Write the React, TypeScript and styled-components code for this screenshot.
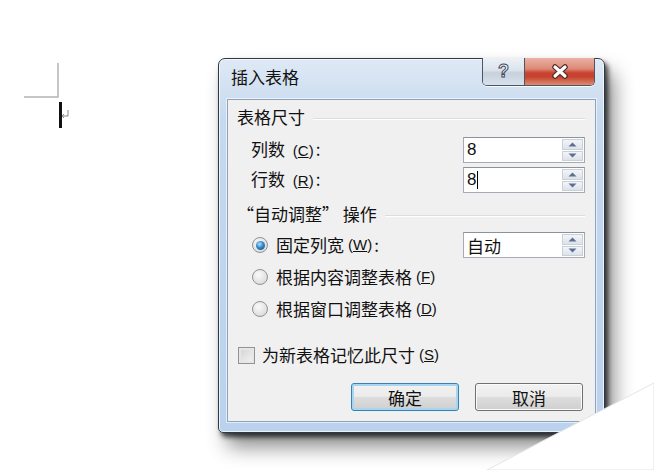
import styled, { createGlobalStyle } from 'styled-components'

const GlobalStyle = createGlobalStyle`
  html, body {
    margin: 0;
    padding: 0;
    background: #fff;
  }
`

const cjk = `"Noto Sans CJK SC", "Noto Sans", sans-serif`

const Spin = () => (
  <SpinBox>
    <SpinHalf>
      <svg width="9" height="5" viewBox="0 0 9 5">
        <path d="M0.5 4.5 L4.5 0.5 L8.5 4.5 Z" fill="#5a6f92" />
      </svg>
    </SpinHalf>
    <SpinHalf>
      <svg width="9" height="5" viewBox="0 0 9 5">
        <path d="M0.5 0.5 L4.5 4.5 L8.5 0.5 Z" fill="#5a6f92" />
      </svg>
    </SpinHalf>
  </SpinBox>
)

const App = () => {
  return (
    <>
      <GlobalStyle />
      <Canvas>
        <Marks width="60" height="80" viewBox="0 0 60 80">
          <path d="M38 3 V37 H4" fill="none" stroke="#b4b4b4" strokeWidth="1.5" />
          <rect x="39" y="42" width="3" height="26" fill="#111" />
          <path d="M48 50 V56 H42 M44 54 L42 56 L44 58" fill="none" stroke="#888" strokeWidth="1" />
        </Marks>

        <Window>
          <TitleBar>
            <Caption>插入表格</Caption>
            <CaptionButtons>
              <HelpButton>?</HelpButton>
              <CloseButton>
                <svg width="18" height="15" viewBox="0 0 18 15">
                  <path d="M4 3 L14 12 M14 3 L4 12" stroke="#4a2a26" strokeWidth="5.5" strokeLinecap="round" />
                  <path d="M4 3 L14 12 M14 3 L4 12" stroke="#fff" strokeWidth="3.2" strokeLinecap="round" />
                </svg>
              </CloseButton>
            </CaptionButtons>
          </TitleBar>

          <Body>
            <GroupHeader>
              <span>表格尺寸</span>
              <Rule />
            </GroupHeader>
            <FieldRow>
              <Label>
                列数 <Key>(<u>C</u>)</Key>:
              </Label>
              <Input>
                <InputText>8</InputText>
                <Spin />
              </Input>
            </FieldRow>
            <FieldRow>
              <Label>
                行数 <Key>(<u>R</u>)</Key>:
              </Label>
              <Input>
                <InputText>
                  8<Caret />
                </InputText>
                <Spin />
              </Input>
            </FieldRow>

            <GroupHeader $gap={11}>
              <span>“自动调整” 操作</span>
              <Rule />
            </GroupHeader>
            <RadioList>
              <FieldRow $indent={15}>
                <OptionLabel>
                  <Radio $checked />
                  固定列宽 <Key>(<u>W</u>)</Key>:
                </OptionLabel>
                <Input>
                  <InputText>自动</InputText>
                  <Spin />
                </Input>
              </FieldRow>
              <FieldRow $indent={15}>
                <OptionLabel>
                  <Radio />
                  根据内容调整表格 <Key>(<u>F</u>)</Key>
                </OptionLabel>
              </FieldRow>
              <FieldRow $indent={15}>
                <OptionLabel>
                  <Radio />
                  根据窗口调整表格 <Key>(<u>D</u>)</Key>
                </OptionLabel>
              </FieldRow>
            </RadioList>

            <CheckRow>
              <Check />
              为新表格记忆此尺寸 <Key>(<u>S</u>)</Key>
            </CheckRow>

            <Buttons>
              <Button $default>确定</Button>
              <Button>取消</Button>
            </Buttons>
          </Body>
        </Window>

        <Curl width="170" height="90" viewBox="0 0 170 90">
          <polygon points="170,3 170,90 3,90" fill="#fff" stroke="#e4e4e4" strokeWidth="1" />
        </Curl>
      </Canvas>
    </>
  )
}

export default App

const Canvas = styled.div`
  position: relative;
  width: 654px;
  height: 470px;
  overflow: hidden;
  background: #fff;
  font-family: ${cjk};
`

const Marks = styled.svg`
  position: absolute;
  left: 20px;
  top: 60px;
`

const Curl = styled.svg`
  position: absolute;
  right: 0;
  bottom: 0;
  z-index: 2;
`

const Window = styled.div`
  position: absolute;
  left: 218px;
  top: 58px;
  width: 385px;
  height: 373px;
  display: flex;
  flex-direction: column;
  border: 1px solid #2f3946;
  border-radius: 7px 7px 5px 5px;
  background: linear-gradient(180deg, #dfe9f5 0px, #d2e1f1 30px, #c5d9ef 60px, #bad2ed 100%);
  box-shadow: inset 0 0 0 1px rgba(255, 255, 255, 0.7), 3px 4px 5px rgba(0, 0, 0, 0.7),
    9px 14px 20px rgba(0, 0, 0, 0.45);
`

const TitleBar = styled.div`
  height: 40px;
  display: flex;
  align-items: flex-start;
  padding-left: 12px;
`

const Caption = styled.div`
  padding-top: 8px;
  font-size: 17px;
  line-height: 20px;
  color: #111;
`

const CaptionButtons = styled.div`
  margin-left: auto;
  margin-right: 9px;
  margin-top: -1px;
  display: flex;
  height: 27px;
  border: 1px solid #4a5666;
  border-top: none;
  border-radius: 0 0 5px 5px;
  overflow: hidden;
  box-shadow: 0 1px 0 rgba(255, 255, 255, 0.8);
`

const HelpButton = styled.div`
  width: 41px;
  display: flex;
  align-items: center;
  justify-content: center;
  background: linear-gradient(180deg, #edf1f6 0%, #dbe3ec 45%, #c6d1dd 55%, #d8e1eb 100%);
  border-right: 1px solid #4a5666;
  font-family: "Liberation Sans", sans-serif;
  font-weight: bold;
  font-size: 18px;
  color: #f4f6f9;
  -webkit-text-stroke: 1px #3c4a5e;
`

const CloseButton = styled.div`
  width: 69px;
  display: flex;
  align-items: center;
  justify-content: center;
  background: linear-gradient(180deg, #eab1a3 0%, #dc8a76 40%, #c9422f 55%, #c4432f 70%, #dd8c6f 100%);
`

const Body = styled.div`
  flex: 1;
  margin: 0 8px 10px;
  padding: 7px 10px 0 9px;
  display: flex;
  flex-direction: column;
  background: #f0f0f0;
  border: 1px solid #8ea3bb;
  box-shadow: 0 0 0 1px rgba(255, 255, 255, 0.6);
  font-size: 17px;
  color: #111;
`

const GroupHeader = styled.div<{ $gap?: number }>`
  display: flex;
  align-items: center;
  gap: 8px;
  height: 20px;
  line-height: 20px;
  margin-top: ${(p) => p.$gap ?? 0}px;
  margin-bottom: 10px;
  white-space: nowrap;
`

const Rule = styled.div`
  flex: 1;
  height: 0;
  margin-top: 3px;
  border-top: 1px solid #d5dfe5;
  border-bottom: 1px solid #fff;
`

const FieldRow = styled.div<{ $indent?: number }>`
  display: flex;
  align-items: center;
  justify-content: space-between;
  height: 26px;
  padding-left: ${(p) => p.$indent ?? 14}px;
  & + & {
    margin-top: 4px;
  }
`

const RadioList = styled.div`
  display: flex;
  flex-direction: column;
  margin-top: -2px;
  gap: 2px;
`

const Label = styled.div`
  white-space: nowrap;
  line-height: 20px;
`

const OptionLabel = styled.div`
  display: flex;
  align-items: center;
  white-space: nowrap;
  line-height: 20px;
`

const Key = styled.span`
  font-family: "Liberation Sans", sans-serif;
  font-size: 15px;
  margin: 0 2px 0 4px;
`

const Input = styled.div`
  width: 120px;
  height: 24px;
  display: flex;
  align-items: stretch;
  background: #fff;
  border: 1px solid #a5acb5;
  border-top-color: #8b929b;
`

const InputText = styled.div`
  flex: 1;
  display: flex;
  align-items: center;
  padding-left: 3px;
  font-family: "Liberation Sans", ${cjk};
  font-size: 17px;
`

const Caret = styled.span`
  display: inline-block;
  width: 1px;
  height: 18px;
  margin-left: 1px;
  background: #000;
`

const SpinBox = styled.div`
  width: 21px;
  margin: 1px 1px 1px 0;
  display: flex;
  flex-direction: column;
  gap: 1px;
`

const SpinHalf = styled.div`
  flex: 1;
  display: flex;
  align-items: center;
  justify-content: center;
  background: linear-gradient(180deg, #f3f5f8, #dde2ea);
  border: 1px solid #c9d0da;
`

const Radio = styled.span<{ $checked?: boolean }>`
  width: 16px;
  height: 16px;
  margin-right: 8px;
  border-radius: 50%;
  border: 1px solid #8f9499;
  box-sizing: border-box;
  display: inline-flex;
  align-items: center;
  justify-content: center;
  background: radial-gradient(circle at 40% 35%, #fafafa 0%, #e2e2e2 60%, #cfcfcf 100%);
  &::after {
    content: '';
    display: ${(p) => (p.$checked ? 'block' : 'none')};
    width: 9px;
    height: 9px;
    border-radius: 50%;
    background: radial-gradient(circle at 40% 35%, #b8e2fb 0%, #2f88c8 45%, #164a7c 100%);
  }
`

const CheckRow = styled.div`
  display: flex;
  align-items: center;
  height: 26px;
  margin-top: 20px;
  padding-left: 1px;
  white-space: nowrap;
  line-height: 20px;
`

const Check = styled.span`
  width: 17px;
  height: 17px;
  margin-right: 7px;
  box-sizing: border-box;
  border: 1px solid #8f9499;
  background: linear-gradient(135deg, #d2d2d2, #f4f4f4);
  box-shadow: inset 0 0 0 2px #e6e6e6;
`

const Buttons = styled.div`
  display: flex;
  justify-content: flex-end;
  gap: 16px;
  margin-top: 15px;
  padding-right: 2px;
`

const Button = styled.div<{ $default?: boolean }>`
  width: 108px;
  height: 28px;
  box-sizing: border-box;
  display: flex;
  align-items: center;
  justify-content: center;
  border-radius: 3px;
  border: 1px solid ${(p) => (p.$default ? '#3c7fb1' : '#707070')};
  background: linear-gradient(180deg, #f2f2f2 0%, #ebebeb 48%, #dddddd 52%, #cfcfcf 100%);
  box-shadow: inset 0 0 0 ${(p) => (p.$default ? '2px #a6d6f2' : '1px #fbfbfb')};
  font-size: 17px;
  color: #111;
`
